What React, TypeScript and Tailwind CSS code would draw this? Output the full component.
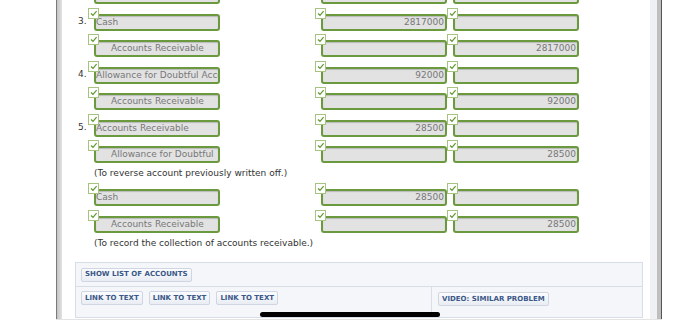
import React from "react";

type Entry = {
  num?: string;
  account: string;
  indent?: boolean;
  debit?: string;
  credit?: string;
  h: number;
};

const font = { fontFamily: '"DejaVu Sans", Verdana, sans-serif' };

const Check = () => (
  <span className="absolute left-[-6px] top-[-6px] z-10 flex h-[11px] w-[11px] items-start justify-start border border-[#a6c47f] bg-white">
    <svg width="8" height="7" viewBox="0 0 8 7" className="ml-[1px] mt-[1px]">
      <path d="M1 3.5 L3 5.3 L6.6 1.2" fill="none" stroke="#5f9a2f" strokeWidth="1.2" />
    </svg>
  </span>
);

const Box = ({ text, indent, right, check = true }: { text?: string; indent?: boolean; right?: boolean; check?: boolean }) => (
  <div className="relative h-[17px] w-[126px] shrink-0">
    {check && <Check />}
    <div
      className={`flex h-[17px] w-[126px] items-center overflow-hidden whitespace-nowrap rounded-[3px] border-2 border-[#6b993d] bg-[#e2e2e2] text-[9px] leading-[13px] text-[#777] shadow-[inset_0_1px_1px_rgba(0,0,0,0.18)] ${
        right ? "justify-end pr-[1px]" : indent ? "pl-[15px]" : "pl-0"
      }`}
    >
      {text}
    </div>
  </div>
);

const Row = ({ e, check = true }: { e: Entry; check?: boolean }) => (
  <div className="flex shrink-0 items-start pl-[16px]" style={{ height: e.h }}>
    <div className="w-[16px] shrink-0 pt-[1px] text-[9px] leading-[12px] text-[#333]">{e.num}</div>
    <Box text={e.account} indent={e.indent} check={check} />
    <div className="ml-[101px]">
      <Box text={e.debit} right check={check} />
    </div>
    <div className="ml-[6px]">
      <Box text={e.credit} right check={check} />
    </div>
  </div>
);

const Note = ({ children, after }: { children: React.ReactNode; after: number }) => (
  <div className="shrink-0 pl-[32px]" style={{ paddingBottom: after }}>
    <div className="h-[14px] text-[9px] leading-[14px] text-[#333]">{children}</div>
  </div>
);

const Btn = ({ children }: { children: React.ReactNode }) => (
  <div className="flex h-[14px] items-center rounded-[2px] border border-[#cfd6e1] bg-gradient-to-b from-[#fbfcfe] to-[#e9edf3] px-[3px] text-[7px] font-bold leading-none text-[#3b5888]">
    {children}
  </div>
);

export default function App() {
  return (
    <div className="relative h-[324px] w-[700px] overflow-hidden bg-white" style={font}>
      <div className="ml-[56px] flex h-[320px] w-[606px] border-b border-[#e4e4e4]">
        <div className="w-[6px] shrink-0 border-l border-[#7a7a7a] bg-gradient-to-r from-[#c4c4c4] to-[#e2e2e2]" />
        <div className="flex flex-1 flex-col">
          <div className="mt-[-13px] flex flex-col">
            <Row e={{ account: "", h: 27 }} check={false} />
            <Row e={{ num: "3.", account: "Cash", debit: "2817000", h: 26 }} />
            <Row e={{ account: "Accounts Receivable", indent: true, credit: "2817000", h: 27 }} />
            <Row e={{ num: "4.", account: "Allowance for Doubtful Accounts", debit: "92000", h: 26 }} />
            <Row e={{ account: "Accounts Receivable", indent: true, credit: "92000", h: 27 }} />
            <Row e={{ num: "5.", account: "Accounts Receivable", debit: "28500", h: 26 }} />
            <Row e={{ account: "Allowance for Doubtful", indent: true, credit: "28500", h: 20 }} />
            <Note after={9}>(To reverse account previously written off.)</Note>
            <Row e={{ account: "Cash", debit: "28500", h: 27 }} />
            <Row e={{ account: "Accounts Receivable", indent: true, credit: "28500", h: 20 }} />
            <Note after={12}>(To record the collection of accounts receivable.)</Note>
          </div>
          <div className="ml-[13px] w-[568px] border border-[#d8dee7] bg-[#f4f6f9]">
            <div className="flex h-[24px] items-center border-b border-[#d8dee7] pl-[5px]">
              <Btn>SHOW LIST OF ACCOUNTS</Btn>
            </div>
            <div className="flex h-[30px]">
              <div className="flex w-[356px] items-start gap-[6px] border-r border-[#d8dee7] pl-[5px] pt-[4px]">
                <Btn>LINK TO TEXT</Btn>
                <Btn>LINK TO TEXT</Btn>
                <Btn>LINK TO TEXT</Btn>
              </div>
              <div className="flex items-start pl-[6px] pt-[5px]">
                <Btn>VIDEO: SIMILAR PROBLEM</Btn>
              </div>
            </div>
          </div>
        </div>
        <div className="w-[7px] shrink-0 bg-[#eef0f4]" />
        <div className="w-[4px] shrink-0 bg-[#bfbfbf]" />
        <div className="w-[1px] shrink-0 bg-[#555]" />
      </div>
      <div className="absolute left-[260px] top-[312px] h-[5px] w-[180px] rounded-full bg-black" />
    </div>
  );
}
